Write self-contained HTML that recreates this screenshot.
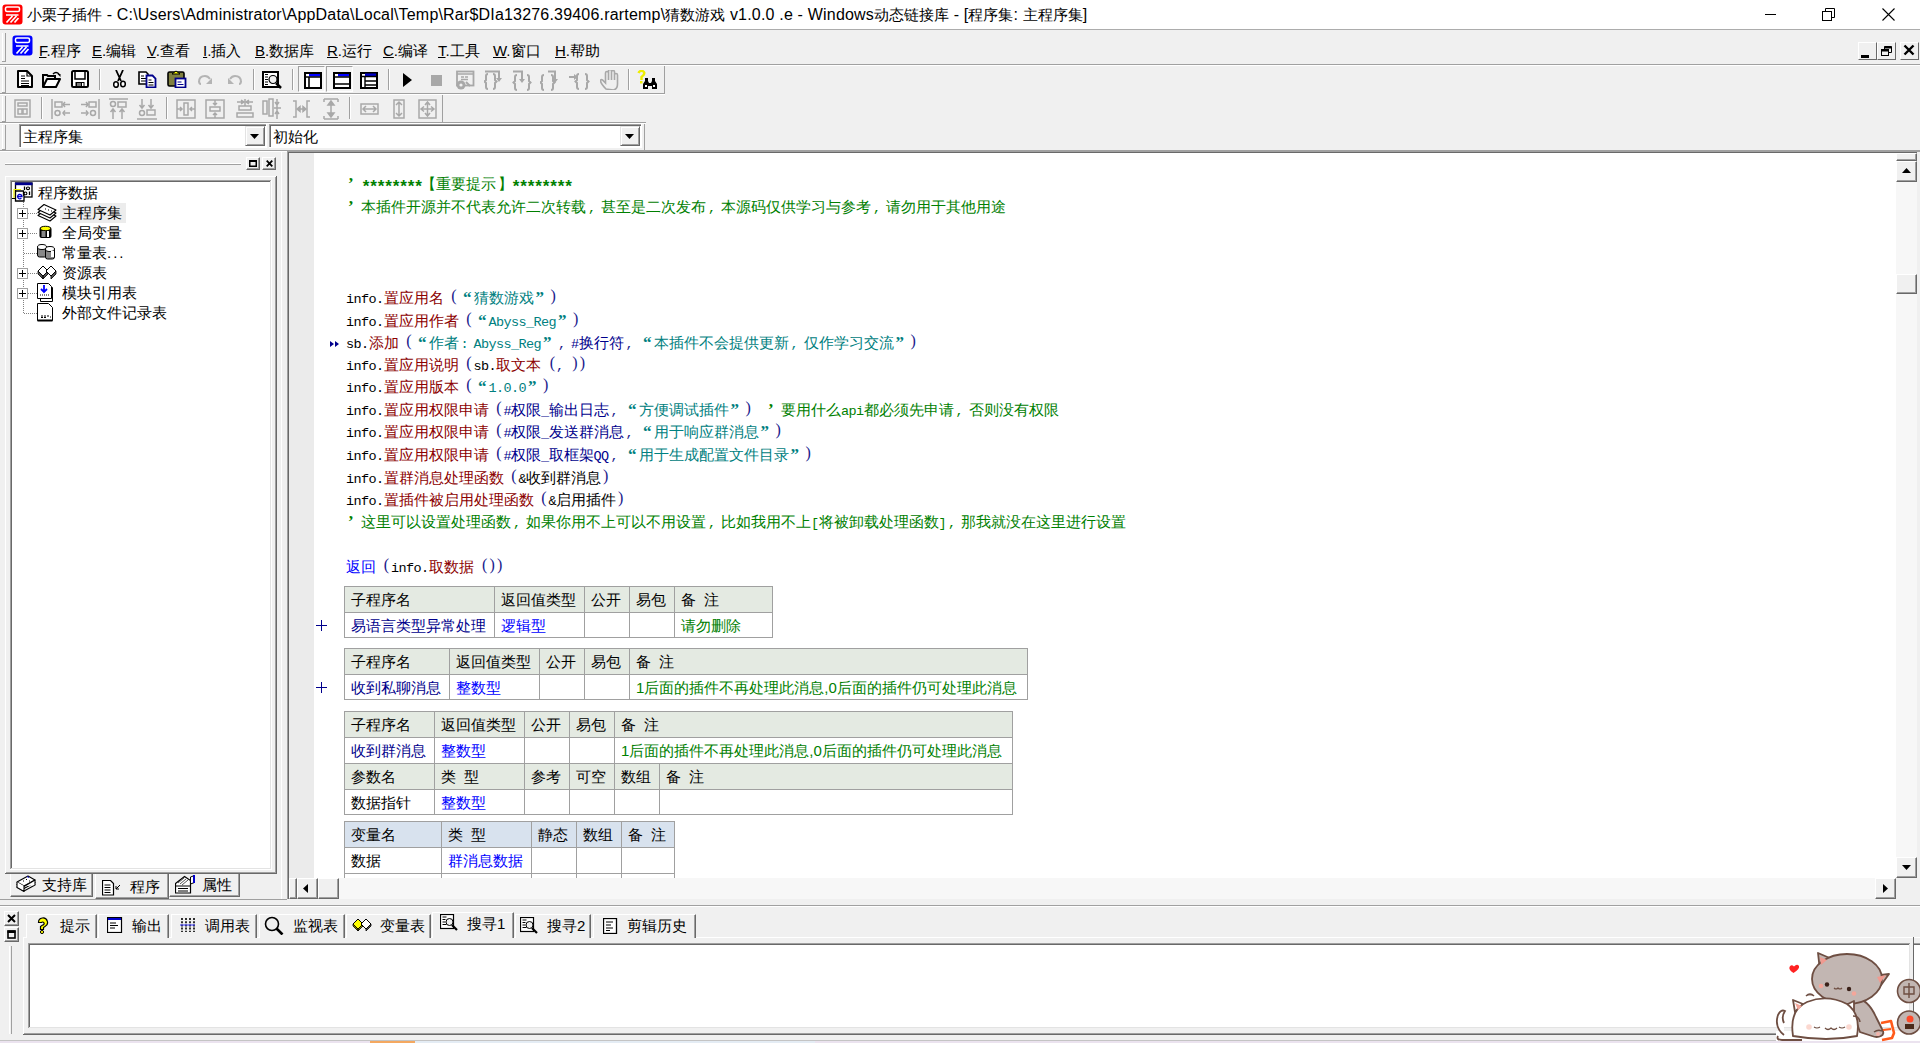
<!DOCTYPE html>
<html><head><meta charset="utf-8"><style>
*{box-sizing:border-box;margin:0;padding:0}
html,body{width:1920px;height:1043px;overflow:hidden;background:#f0f0f0;font-family:"Liberation Sans",sans-serif;position:relative}
.a{position:absolute}
.t{position:absolute;white-space:pre;line-height:1}
.l{font-size:16px;letter-spacing:0.19px}
.m{font-family:"Liberation Mono",monospace;font-size:13.5px;letter-spacing:-0.6px}
.cl{position:absolute;white-space:pre;font-size:15px;line-height:15px;height:15px}
.fp{display:inline-block;width:15px}
.ast{font-size:17px;letter-spacing:-2.7px;position:relative;top:3px;font-weight:bold}
.fa{display:inline-block;width:7.5px;text-align:center}
.ps{font-family:"Liberation Serif",serif;font-size:16px;position:relative;top:-2px}
.pq{font-family:"Liberation Serif",serif;font-size:17px;font-weight:bold;vertical-align:top}
.tc{position:absolute;white-space:pre;font-size:15px;line-height:15px}
</style></head><body>
<div class="a" style="left:0px;top:0px;width:1920px;height:29px;background:#fff;"></div>
<div class="a" style="left:0px;top:29px;width:1920px;height:1px;background:#acacac;"></div>
<svg class="a" style="left:2px;top:4px;" width="21" height="21" viewBox="0 0 21 21"><rect x="0.5" y="0.5" width="20" height="20" rx="3" fill="#f00"/><rect x="3.5" y="3" width="14" height="4.5" rx="1.5" fill="none" stroke="#fff" stroke-width="1.5"/><path d="M4 11h12.5M4.5 18.5l6-6.5M8.5 18.5l6-6.5M12.5 18.5l4-4.5" stroke="#fff" stroke-width="1.7" fill="none"/></svg>
<div class="t" style="left:27px;top:7px;font-size:15px;color:#000;">小栗子插件<span class="l"> - C:\Users\Administrator\AppData\Local\Temp\Rar$DIa13276.39406.rartemp\</span>猜数游戏<span class="l"> v1.0.0 .e - Windows</span>动态链接库<span class="l"> - [</span>程序集<span class="l">: </span>主程序集<span class="l">]</span></div>
<div class="a" style="left:1765px;top:14px;width:11px;height:1px;background:#000;"></div>
<svg class="a" style="left:1822px;top:8px;" width="14" height="14" viewBox="0 0 14 14"><rect x="0.5" y="3.5" width="9" height="9" fill="none" stroke="#000"/><path d="M3.5 3.5V0.5h9v9h-3" fill="none" stroke="#000"/></svg>
<svg class="a" style="left:1882px;top:8px;" width="13" height="13" viewBox="0 0 13 13"><path d="M0.5 0.5L12.5 12.5M12.5 0.5L0.5 12.5" stroke="#000" stroke-width="1.1"/></svg>
<div class="a" style="left:0px;top:64px;width:1920px;height:1px;background:#a0a0a0;"></div>
<div class="a" style="left:0px;top:65px;width:1920px;height:1px;background:#fff;"></div>
<div class="a" style="left:2px;top:33px;width:1px;height:29px;background:#fff;"></div>
<div class="a" style="left:5px;top:33px;width:1px;height:29px;background:#a0a0a0;"></div>
<div class="a" style="left:2px;top:61px;width:4px;height:1px;background:#a0a0a0;"></div>
<svg class="a" style="left:12px;top:35px;" width="21" height="21" viewBox="0 0 21 21"><rect x="0.5" y="0.5" width="20" height="20" rx="3" fill="#00f"/><rect x="3.5" y="3" width="14" height="4.5" rx="1.5" fill="none" stroke="#fff" stroke-width="1.5"/><path d="M4 11h12.5M4.5 18.5l6-6.5M8.5 18.5l6-6.5M12.5 18.5l4-4.5" stroke="#fff" stroke-width="1.7" fill="none"/></svg>
<div class="t" style="left:39px;top:43px;font-size:15px;color:#000;"><span style="text-decoration:underline">F</span>.程序</div>
<div class="t" style="left:92px;top:43px;font-size:15px;color:#000;"><span style="text-decoration:underline">E</span>.编辑</div>
<div class="t" style="left:147px;top:43px;font-size:15px;color:#000;"><span style="text-decoration:underline">V</span>.查看</div>
<div class="t" style="left:203px;top:43px;font-size:15px;color:#000;"><span style="text-decoration:underline">I</span>.插入</div>
<div class="t" style="left:255px;top:43px;font-size:15px;color:#000;"><span style="text-decoration:underline">B</span>.数据库</div>
<div class="t" style="left:327px;top:43px;font-size:15px;color:#000;"><span style="text-decoration:underline">R</span>.运行</div>
<div class="t" style="left:383px;top:43px;font-size:15px;color:#000;"><span style="text-decoration:underline">C</span>.编译</div>
<div class="t" style="left:438px;top:43px;font-size:15px;color:#000;"><span style="text-decoration:underline">T</span>.工具</div>
<div class="t" style="left:493px;top:43px;font-size:15px;color:#000;"><span style="text-decoration:underline">W</span>.窗口</div>
<div class="t" style="left:555px;top:43px;font-size:15px;color:#000;"><span style="text-decoration:underline">H</span>.帮助</div>
<div class="a" style="left:1858px;top:42px;width:19px;height:18px;background:#f0f0f0;border-top:1px solid #fff;border-left:1px solid #fff;border-right:1px solid #696969;border-bottom:1px solid #696969"></div>
<div class="a" style="left:1877px;top:42px;width:19px;height:18px;background:#f0f0f0;border-top:1px solid #fff;border-left:1px solid #fff;border-right:1px solid #696969;border-bottom:1px solid #696969"></div>
<div class="a" style="left:1900px;top:42px;width:19px;height:18px;background:#f0f0f0;border-top:1px solid #fff;border-left:1px solid #fff;border-right:1px solid #696969;border-bottom:1px solid #696969"></div>
<div class="a" style="left:1861px;top:55px;width:8px;height:3px;background:#000;"></div>
<svg class="a" style="left:1880px;top:44px;" width="14" height="14" viewBox="0 0 14 14"><rect x="1.5" y="5.5" width="7" height="6" fill="none" stroke="#000" stroke-width="1"/><rect x="1.5" y="5.5" width="7" height="2" fill="#000"/><path d="M4.5 5.5V2.5h7v6h-3" fill="none" stroke="#000"/><rect x="4.5" y="2.5" width="7" height="2" fill="#000"/></svg>
<svg class="a" style="left:1903px;top:44px;" width="12" height="12" viewBox="0 0 12 12"><path d="M1.5 1.5L10.5 10.5M10.5 1.5L1.5 10.5" stroke="#000" stroke-width="2.4"/></svg>
<div class="a" style="left:2px;top:67px;width:1px;height:26px;background:#fff;"></div>
<div class="a" style="left:5px;top:67px;width:1px;height:26px;background:#a0a0a0;"></div>
<div class="a" style="left:2px;top:92px;width:4px;height:1px;background:#a0a0a0;"></div>
<div class="a" style="left:0px;top:93px;width:665px;height:1px;background:#a0a0a0;"></div>
<div class="a" style="left:0px;top:94px;width:665px;height:1px;background:#fff;"></div>
<div class="a" style="left:664px;top:66px;width:1px;height:28px;background:#a0a0a0;"></div>
<div class="a" style="left:2px;top:96px;width:1px;height:26px;background:#fff;"></div>
<div class="a" style="left:5px;top:96px;width:1px;height:26px;background:#a0a0a0;"></div>
<div class="a" style="left:2px;top:121px;width:4px;height:1px;background:#a0a0a0;"></div>
<div class="a" style="left:0px;top:122px;width:646px;height:1px;background:#a0a0a0;"></div>
<div class="a" style="left:0px;top:123px;width:646px;height:1px;background:#fff;"></div>
<div class="a" style="left:442px;top:95px;width:1px;height:28px;background:#a0a0a0;"></div>
<div class="a" style="left:2px;top:125px;width:1px;height:25px;background:#fff;"></div>
<div class="a" style="left:5px;top:125px;width:1px;height:25px;background:#a0a0a0;"></div>
<div class="a" style="left:2px;top:149px;width:4px;height:1px;background:#a0a0a0;"></div>
<div class="a" style="left:644px;top:124px;width:1px;height:27px;background:#a0a0a0;"></div>
<div class="a" style="left:19px;top:124px;width:248px;height:24px;background:#fff;"></div>
<div class="a" style="left:19px;top:124px;width:248px;height:1px;background:#a0a0a0;"></div>
<div class="a" style="left:19px;top:124px;width:1px;height:24px;background:#a0a0a0;"></div>
<div class="a" style="left:20px;top:125px;width:246px;height:1px;background:#696969;"></div>
<div class="a" style="left:20px;top:125px;width:1px;height:22px;background:#696969;"></div>
<div class="a" style="left:19px;top:147px;width:248px;height:1px;background:#fff;"></div>
<div class="a" style="left:266px;top:124px;width:1px;height:24px;background:#fff;"></div>
<div class="a" style="left:245px;top:126px;width:20px;height:20px;background:#f0f0f0;border-top:1px solid #e3e3e3;border-left:1px solid #e3e3e3;border-right:1px solid #696969;border-bottom:1px solid #696969;box-shadow:inset 1px 1px 0 #fff,inset -1px -1px 0 #a0a0a0"></div>
<svg class="a" style="left:250px;top:134px;" width="10" height="6" viewBox="0 0 10 6"><path d="M0 0h9L4.5 5z" fill="#000"/></svg>
<div class="t" style="left:23px;top:129px;font-size:15px;color:#000;">主程序集</div>
<div class="a" style="left:269px;top:124px;width:373px;height:24px;background:#fff;"></div>
<div class="a" style="left:269px;top:124px;width:373px;height:1px;background:#a0a0a0;"></div>
<div class="a" style="left:269px;top:124px;width:1px;height:24px;background:#a0a0a0;"></div>
<div class="a" style="left:270px;top:125px;width:371px;height:1px;background:#696969;"></div>
<div class="a" style="left:270px;top:125px;width:1px;height:22px;background:#696969;"></div>
<div class="a" style="left:269px;top:147px;width:373px;height:1px;background:#fff;"></div>
<div class="a" style="left:641px;top:124px;width:1px;height:24px;background:#fff;"></div>
<div class="a" style="left:620px;top:126px;width:20px;height:20px;background:#f0f0f0;border-top:1px solid #e3e3e3;border-left:1px solid #e3e3e3;border-right:1px solid #696969;border-bottom:1px solid #696969;box-shadow:inset 1px 1px 0 #fff,inset -1px -1px 0 #a0a0a0"></div>
<svg class="a" style="left:625px;top:134px;" width="10" height="6" viewBox="0 0 10 6"><path d="M0 0h9L4.5 5z" fill="#000"/></svg>
<div class="t" style="left:273px;top:129px;font-size:15px;color:#000;">初始化</div>
<div class="a" style="left:0px;top:150px;width:1920px;height:1px;background:#a0a0a0;"></div>
<div class="a" style="left:0px;top:151px;width:1920px;height:1px;background:#fff;"></div>
<div class="a" style="left:5px;top:163px;width:236px;height:1px;background:#fff;"></div>
<div class="a" style="left:5px;top:164px;width:236px;height:1px;background:#a0a0a0;"></div>
<div class="a" style="left:246px;top:157px;width:14px;height:13px;background:#f0f0f0;border-top:1px solid #fff;border-left:1px solid #fff;border-right:1px solid #696969;border-bottom:1px solid #696969;box-shadow:inset -1px -1px 0 #a0a0a0"></div>
<div class="a" style="left:262px;top:157px;width:14px;height:13px;background:#f0f0f0;border-top:1px solid #fff;border-left:1px solid #fff;border-right:1px solid #696969;border-bottom:1px solid #696969;box-shadow:inset -1px -1px 0 #a0a0a0"></div>
<svg class="a" style="left:249px;top:160px;" width="8" height="7" viewBox="0 0 8 7"><rect x="0.75" y="0.75" width="6.5" height="5.5" fill="none" stroke="#000" stroke-width="1.5"/><rect x="0" y="0" width="8" height="2" fill="#000"/></svg>
<svg class="a" style="left:266px;top:160px;" width="7" height="7" viewBox="0 0 7 7"><path d="M0.7 0.7L6.3 6.3M6.3 0.7L0.7 6.3" stroke="#000" stroke-width="1.8"/></svg>
<div class="a" style="left:5px;top:176px;width:272px;height:1px;background:#fff;"></div>
<div class="a" style="left:5px;top:176px;width:1px;height:698px;background:#fff;"></div>
<div class="a" style="left:276px;top:176px;width:1px;height:698px;background:#696969;"></div>
<div class="a" style="left:5px;top:873px;width:272px;height:1px;background:#696969;"></div>
<div class="a" style="left:275px;top:177px;width:1px;height:696px;background:#a0a0a0;"></div>
<div class="a" style="left:6px;top:872px;width:270px;height:1px;background:#a0a0a0;"></div>
<div class="a" style="left:10px;top:180px;width:262px;height:690px;background:#fff;"></div>
<div class="a" style="left:10px;top:180px;width:261px;height:1px;background:#a0a0a0;"></div>
<div class="a" style="left:10px;top:180px;width:1px;height:689px;background:#a0a0a0;"></div>
<div class="a" style="left:11px;top:181px;width:259px;height:1px;background:#696969;"></div>
<div class="a" style="left:11px;top:181px;width:1px;height:687px;background:#696969;"></div>
<div class="a" style="left:270px;top:181px;width:1px;height:688px;background:#e3e3e3;"></div>
<div class="a" style="left:11px;top:868px;width:260px;height:1px;background:#e3e3e3;"></div>
<div class="a" style="left:281px;top:152px;width:1px;height:748px;background:#fff;"></div>
<div class="a" style="left:0px;top:899px;width:287px;height:1px;background:#a0a0a0;"></div>
<div class="a" style="left:287px;top:151px;width:1633px;height:1px;background:#a0a0a0;"></div>
<div class="a" style="left:287px;top:152px;width:1630px;height:1px;background:#696969;"></div>
<div class="a" style="left:287px;top:151px;width:1px;height:748px;background:#a0a0a0;"></div>
<div class="a" style="left:288px;top:152px;width:1px;height:747px;background:#696969;"></div>
<div class="a" style="left:289px;top:153px;width:25px;height:725px;background:#ebebeb;"></div>
<div class="a" style="left:314px;top:153px;width:1582px;height:725px;background:#fff;"></div>
<div class="a" style="left:0px;top:905px;width:1920px;height:1px;background:#a0a0a0;"></div>
<div class="a" style="left:0px;top:906px;width:1920px;height:1px;background:#fff;"></div>
<div class="a" style="left:4px;top:911px;width:15px;height:15px;background:#f0f0f0;border-top:1px solid #fff;border-left:1px solid #fff;border-right:1px solid #696969;border-bottom:1px solid #696969;box-shadow:inset -1px -1px 0 #a0a0a0"></div>
<div class="a" style="left:4px;top:927px;width:15px;height:15px;background:#f0f0f0;border-top:1px solid #fff;border-left:1px solid #fff;border-right:1px solid #696969;border-bottom:1px solid #696969;box-shadow:inset -1px -1px 0 #a0a0a0"></div>
<svg class="a" style="left:7px;top:914px;" width="9" height="9" viewBox="0 0 9 9"><path d="M1 1L8 8M8 1L1 8" stroke="#000" stroke-width="2"/></svg>
<svg class="a" style="left:7px;top:930px;" width="9" height="9" viewBox="0 0 9 9"><rect x="1" y="1" width="7" height="7" fill="none" stroke="#000" stroke-width="1.6"/><rect x="0.5" y="0.5" width="8" height="2.5" fill="#000"/></svg>
<div class="a" style="left:9px;top:946px;width:1px;height:88px;background:#fff;"></div>
<div class="a" style="left:11px;top:946px;width:1px;height:88px;background:#a0a0a0;"></div>
<div class="a" style="left:23px;top:937px;width:1897px;height:1px;background:#fff;"></div>
<div class="a" style="left:23px;top:937px;width:1px;height:98px;background:#fff;"></div>
<div class="a" style="left:23px;top:1034px;width:1897px;height:1px;background:#696969;"></div>
<div class="a" style="left:24px;top:1033px;width:1896px;height:1px;background:#a0a0a0;"></div>
<div class="a" style="left:28px;top:943px;width:1892px;height:85px;background:#fff;"></div>
<div class="a" style="left:28px;top:943px;width:1892px;height:1px;background:#a0a0a0;"></div>
<div class="a" style="left:28px;top:943px;width:1px;height:85px;background:#a0a0a0;"></div>
<div class="a" style="left:29px;top:944px;width:1891px;height:1px;background:#696969;"></div>
<div class="a" style="left:29px;top:944px;width:1px;height:83px;background:#696969;"></div>
<div class="a" style="left:29px;top:1027px;width:1891px;height:1px;background:#e3e3e3;"></div>
<div class="a" style="left:0px;top:1040px;width:1920px;height:1px;background:#c4c4c4;"></div>
<div class="a" style="left:0px;top:1041px;width:1920px;height:2px;background:#ebe3ef;"></div>
<div class="a" style="left:370px;top:1041px;width:45px;height:2px;background:#f4a860;"></div>
<div class="a" style="left:415px;top:1041px;width:400px;height:2px;background:#e4ecf4;"></div>
<div class="cl" style="left:346px;top:176px"><span class="fp pq" style="color:#008000;text-align:left;padding-left:2px;">’</span><span class="m ast" style="color:#008000">********</span><span class="fp" style="color:#008000;text-align:right;padding-right:2px;">【</span><span style="color:#008000">重要提示</span><span class="fp" style="color:#008000;text-align:left;padding-left:2px;">】</span><span class="m ast" style="color:#008000">********</span></div>
<div class="cl" style="left:346px;top:199px"><span class="fp pq" style="color:#008000;text-align:left;padding-left:2px;">’</span><span style="color:#008000">本插件开源并不代表允许二次转载</span><span class="fp m" style="color:#008000;text-align:left;padding-left:2px;">,</span><span style="color:#008000">甚至是二次发布</span><span class="fp m" style="color:#008000;text-align:left;padding-left:2px;">,</span><span style="color:#008000">本源码仅供学习与参考</span><span class="fp m" style="color:#008000;text-align:left;padding-left:2px;">,</span><span style="color:#008000">请勿用于其他用途</span></div>
<div class="cl" style="left:346px;top:290px"><span class="m" style="color:#000">info.</span><span style="color:#8c0000">置应用名</span><span class="fp ps" style="color:#1a1a8c;text-align:right;padding-right:2px;">(</span><span class="fp pq" style="color:#008080;text-align:right;padding-right:2px;">“</span><span style="color:#008080">猜数游戏</span><span class="fp pq" style="color:#008080;text-align:left;padding-left:2px;">”</span><span class="fp ps" style="color:#1a1a8c;text-align:left;padding-left:2px;">)</span></div>
<div class="cl" style="left:346px;top:313px"><span class="m" style="color:#000">info.</span><span style="color:#8c0000">置应用作者</span><span class="fp ps" style="color:#1a1a8c;text-align:right;padding-right:2px;">(</span><span class="fp pq" style="color:#008080;text-align:right;padding-right:2px;">“</span><span class="m" style="color:#008080">Abyss_Reg</span><span class="fp pq" style="color:#008080;text-align:left;padding-left:2px;">”</span><span class="fp ps" style="color:#1a1a8c;text-align:left;padding-left:2px;">)</span></div>
<div class="cl" style="left:346px;top:335px"><span class="m" style="color:#000">sb.</span><span style="color:#8c0000">添加</span><span class="fp ps" style="color:#1a1a8c;text-align:right;padding-right:2px;">(</span><span class="fp pq" style="color:#008080;text-align:right;padding-right:2px;">“</span><span style="color:#008080">作者</span><span class="fp m" style="color:#008080;text-align:left;padding-left:2px;">:</span><span class="m" style="color:#008080">Abyss_Reg</span><span class="fp pq" style="color:#008080;text-align:left;padding-left:2px;">”</span><span class="fp m" style="color:#1a1a8c;text-align:left;padding-left:2px;">,</span><span class="m" style="color:#00008c">#</span><span style="color:#00008c">换行符</span><span class="fp m" style="color:#1a1a8c;text-align:left;padding-left:2px;">,</span><span class="fp pq" style="color:#008080;text-align:right;padding-right:2px;">“</span><span style="color:#008080">本插件不会提供更新</span><span class="fp m" style="color:#008080;text-align:left;padding-left:2px;">,</span><span style="color:#008080">仅作学习交流</span><span class="fp pq" style="color:#008080;text-align:left;padding-left:2px;">”</span><span class="fp ps" style="color:#1a1a8c;text-align:left;padding-left:2px;">)</span></div>
<div class="cl" style="left:346px;top:357px"><span class="m" style="color:#000">info.</span><span style="color:#8c0000">置应用说明</span><span class="fp ps" style="color:#1a1a8c;text-align:right;padding-right:2px;">(</span><span class="m" style="color:#000">sb.</span><span style="color:#8c0000">取文本</span><span class="m" style="color:#1a1a8c"> </span><span class="fa ps" style="color:#1a1a8c">(</span><span class="m" style="color:#1a1a8c">, </span><span class="fa ps" style="color:#1a1a8c">)</span><span class="fa ps" style="color:#1a1a8c">)</span></div>
<div class="cl" style="left:346px;top:379px"><span class="m" style="color:#000">info.</span><span style="color:#8c0000">置应用版本</span><span class="fp ps" style="color:#1a1a8c;text-align:right;padding-right:2px;">(</span><span class="fp pq" style="color:#008080;text-align:right;padding-right:2px;">“</span><span class="m" style="color:#008080">1.0.0</span><span class="fp pq" style="color:#008080;text-align:left;padding-left:2px;">”</span><span class="fp ps" style="color:#1a1a8c;text-align:left;padding-left:2px;">)</span></div>
<div class="cl" style="left:346px;top:402px"><span class="m" style="color:#000">info.</span><span style="color:#8c0000">置应用权限申请</span><span class="fp ps" style="color:#1a1a8c;text-align:right;padding-right:2px;">(</span><span class="m" style="color:#00008c">#</span><span style="color:#00008c">权限</span><span class="m" style="color:#00008c">_</span><span style="color:#00008c">输出日志</span><span class="fp m" style="color:#1a1a8c;text-align:left;padding-left:2px;">,</span><span class="fp pq" style="color:#008080;text-align:right;padding-right:2px;">“</span><span style="color:#008080">方便调试插件</span><span class="fp pq" style="color:#008080;text-align:left;padding-left:2px;">”</span><span class="fp ps" style="color:#1a1a8c;text-align:left;padding-left:2px;">)</span><span class="m" style="color:#000"> </span><span class="fp pq" style="color:#008000;text-align:left;padding-left:2px;">’</span><span style="color:#008000">要用什么</span><span class="m" style="color:#008000">api</span><span style="color:#008000">都必须先申请</span><span class="fp m" style="color:#008000;text-align:left;padding-left:2px;">,</span><span style="color:#008000">否则没有权限</span></div>
<div class="cl" style="left:346px;top:424px"><span class="m" style="color:#000">info.</span><span style="color:#8c0000">置应用权限申请</span><span class="fp ps" style="color:#1a1a8c;text-align:right;padding-right:2px;">(</span><span class="m" style="color:#00008c">#</span><span style="color:#00008c">权限</span><span class="m" style="color:#00008c">_</span><span style="color:#00008c">发送群消息</span><span class="fp m" style="color:#1a1a8c;text-align:left;padding-left:2px;">,</span><span class="fp pq" style="color:#008080;text-align:right;padding-right:2px;">“</span><span style="color:#008080">用于响应群消息</span><span class="fp pq" style="color:#008080;text-align:left;padding-left:2px;">”</span><span class="fp ps" style="color:#1a1a8c;text-align:left;padding-left:2px;">)</span></div>
<div class="cl" style="left:346px;top:447px"><span class="m" style="color:#000">info.</span><span style="color:#8c0000">置应用权限申请</span><span class="fp ps" style="color:#1a1a8c;text-align:right;padding-right:2px;">(</span><span class="m" style="color:#00008c">#</span><span style="color:#00008c">权限</span><span class="m" style="color:#00008c">_</span><span style="color:#00008c">取框架</span><span class="m" style="color:#00008c">QQ</span><span class="fp m" style="color:#1a1a8c;text-align:left;padding-left:2px;">,</span><span class="fp pq" style="color:#008080;text-align:right;padding-right:2px;">“</span><span style="color:#008080">用于生成配置文件目录</span><span class="fp pq" style="color:#008080;text-align:left;padding-left:2px;">”</span><span class="fp ps" style="color:#1a1a8c;text-align:left;padding-left:2px;">)</span></div>
<div class="cl" style="left:346px;top:470px"><span class="m" style="color:#000">info.</span><span style="color:#8c0000">置群消息处理函数</span><span class="fp ps" style="color:#1a1a8c;text-align:right;padding-right:2px;">(</span><span class="m" style="color:#000">&amp;</span><span style="color:#000">收到群消息</span><span class="fp ps" style="color:#1a1a8c;text-align:left;padding-left:2px;">)</span></div>
<div class="cl" style="left:346px;top:492px"><span class="m" style="color:#000">info.</span><span style="color:#8c0000">置插件被启用处理函数</span><span class="fp ps" style="color:#1a1a8c;text-align:right;padding-right:2px;">(</span><span class="m" style="color:#000">&amp;</span><span style="color:#000">启用插件</span><span class="fp ps" style="color:#1a1a8c;text-align:left;padding-left:2px;">)</span></div>
<div class="cl" style="left:346px;top:514px"><span class="fp pq" style="color:#008000;text-align:left;padding-left:2px;">’</span><span style="color:#008000">这里可以设置处理函数</span><span class="fp m" style="color:#008000;text-align:left;padding-left:2px;">,</span><span style="color:#008000">如果你用不上可以不用设置</span><span class="fp m" style="color:#008000;text-align:left;padding-left:2px;">,</span><span style="color:#008000">比如我用不上</span><span class="m" style="color:#008000">[</span><span style="color:#008000">将被卸载处理函数</span><span class="m" style="color:#008000">]</span><span class="fp m" style="color:#008000;text-align:left;padding-left:2px;">,</span><span style="color:#008000">那我就没在这里进行设置</span></div>
<div class="cl" style="left:346px;top:559px"><span style="color:#0000ff">返回</span><span class="fp ps" style="color:#1a1a8c;text-align:right;padding-right:2px;">(</span><span class="m" style="color:#000">info.</span><span style="color:#8c0000">取数据</span><span class="m" style="color:#1a1a8c"> </span><span class="fa ps" style="color:#1a1a8c">(</span><span class="fa ps" style="color:#1a1a8c">)</span><span class="fa ps" style="color:#1a1a8c">)</span></div>
<svg class="a" style="left:330px;top:341px;" width="9" height="6" viewBox="0 0 9 6"><path d="M0 0l4 3l-4 3zM5 0l4 3l-4 3z" fill="#00008c"/></svg>
<div class="a" style="left:344px;top:586px;width:429px;height:27px;background:#e4eae2;border:1px solid #a0a0a0"></div>
<div class="a" style="left:494px;top:586px;width:1px;height:27px;background:#a0a0a0"></div>
<div class="a" style="left:584px;top:586px;width:1px;height:27px;background:#a0a0a0"></div>
<div class="a" style="left:629px;top:586px;width:1px;height:27px;background:#a0a0a0"></div>
<div class="a" style="left:674px;top:586px;width:1px;height:27px;background:#a0a0a0"></div>
<div class="tc" style="left:351px;top:592px;color:#000">子程序名</div>
<div class="tc" style="left:501px;top:592px;color:#000">返回值类型</div>
<div class="tc" style="left:591px;top:592px;color:#000">公开</div>
<div class="tc" style="left:636px;top:592px;color:#000">易包</div>
<div class="tc" style="left:681px;top:592px;color:#000">备  注</div>
<div class="a" style="left:344px;top:612px;width:429px;height:26px;background:#fff;border:1px solid #a0a0a0"></div>
<div class="a" style="left:494px;top:612px;width:1px;height:26px;background:#a0a0a0"></div>
<div class="a" style="left:584px;top:612px;width:1px;height:26px;background:#a0a0a0"></div>
<div class="a" style="left:629px;top:612px;width:1px;height:26px;background:#a0a0a0"></div>
<div class="a" style="left:674px;top:612px;width:1px;height:26px;background:#a0a0a0"></div>
<div class="tc" style="left:351px;top:618px;color:#00008c">易语言类型异常处理</div>
<div class="tc" style="left:501px;top:618px;color:#0000ff">逻辑型</div>
<div class="tc" style="left:681px;top:618px;color:#008000">请勿删除</div>
<div class="a" style="left:344px;top:648px;width:684px;height:27px;background:#e4eae2;border:1px solid #a0a0a0"></div>
<div class="a" style="left:449px;top:648px;width:1px;height:27px;background:#a0a0a0"></div>
<div class="a" style="left:539px;top:648px;width:1px;height:27px;background:#a0a0a0"></div>
<div class="a" style="left:584px;top:648px;width:1px;height:27px;background:#a0a0a0"></div>
<div class="a" style="left:629px;top:648px;width:1px;height:27px;background:#a0a0a0"></div>
<div class="tc" style="left:351px;top:654px;color:#000">子程序名</div>
<div class="tc" style="left:456px;top:654px;color:#000">返回值类型</div>
<div class="tc" style="left:546px;top:654px;color:#000">公开</div>
<div class="tc" style="left:591px;top:654px;color:#000">易包</div>
<div class="tc" style="left:636px;top:654px;color:#000">备  注</div>
<div class="a" style="left:344px;top:674px;width:684px;height:26px;background:#fff;border:1px solid #a0a0a0"></div>
<div class="a" style="left:449px;top:674px;width:1px;height:26px;background:#a0a0a0"></div>
<div class="a" style="left:539px;top:674px;width:1px;height:26px;background:#a0a0a0"></div>
<div class="a" style="left:584px;top:674px;width:1px;height:26px;background:#a0a0a0"></div>
<div class="a" style="left:629px;top:674px;width:1px;height:26px;background:#a0a0a0"></div>
<div class="tc" style="left:351px;top:680px;color:#00008c">收到私聊消息</div>
<div class="tc" style="left:456px;top:680px;color:#0000ff">整数型</div>
<div class="tc" style="left:636px;top:680px;color:#008000">1后面的插件不再处理此消息,0后面的插件仍可处理此消息</div>
<div class="a" style="left:344px;top:711px;width:669px;height:27px;background:#e4eae2;border:1px solid #a0a0a0"></div>
<div class="a" style="left:434px;top:711px;width:1px;height:27px;background:#a0a0a0"></div>
<div class="a" style="left:524px;top:711px;width:1px;height:27px;background:#a0a0a0"></div>
<div class="a" style="left:569px;top:711px;width:1px;height:27px;background:#a0a0a0"></div>
<div class="a" style="left:614px;top:711px;width:1px;height:27px;background:#a0a0a0"></div>
<div class="tc" style="left:351px;top:717px;color:#000">子程序名</div>
<div class="tc" style="left:441px;top:717px;color:#000">返回值类型</div>
<div class="tc" style="left:531px;top:717px;color:#000">公开</div>
<div class="tc" style="left:576px;top:717px;color:#000">易包</div>
<div class="tc" style="left:621px;top:717px;color:#000">备  注</div>
<div class="a" style="left:344px;top:737px;width:669px;height:27px;background:#fff;border:1px solid #a0a0a0"></div>
<div class="a" style="left:434px;top:737px;width:1px;height:27px;background:#a0a0a0"></div>
<div class="a" style="left:524px;top:737px;width:1px;height:27px;background:#a0a0a0"></div>
<div class="a" style="left:569px;top:737px;width:1px;height:27px;background:#a0a0a0"></div>
<div class="a" style="left:614px;top:737px;width:1px;height:27px;background:#a0a0a0"></div>
<div class="tc" style="left:351px;top:743px;color:#00008c">收到群消息</div>
<div class="tc" style="left:441px;top:743px;color:#0000ff">整数型</div>
<div class="tc" style="left:621px;top:743px;color:#008000">1后面的插件不再处理此消息,0后面的插件仍可处理此消息</div>
<div class="a" style="left:344px;top:763px;width:669px;height:27px;background:#e4eae2;border:1px solid #a0a0a0"></div>
<div class="a" style="left:434px;top:763px;width:1px;height:27px;background:#a0a0a0"></div>
<div class="a" style="left:524px;top:763px;width:1px;height:27px;background:#a0a0a0"></div>
<div class="a" style="left:569px;top:763px;width:1px;height:27px;background:#a0a0a0"></div>
<div class="a" style="left:614px;top:763px;width:1px;height:27px;background:#a0a0a0"></div>
<div class="a" style="left:659px;top:763px;width:1px;height:27px;background:#a0a0a0"></div>
<div class="tc" style="left:351px;top:769px;color:#000">参数名</div>
<div class="tc" style="left:441px;top:769px;color:#000">类  型</div>
<div class="tc" style="left:531px;top:769px;color:#000">参考</div>
<div class="tc" style="left:576px;top:769px;color:#000">可空</div>
<div class="tc" style="left:621px;top:769px;color:#000">数组</div>
<div class="tc" style="left:666px;top:769px;color:#000">备  注</div>
<div class="a" style="left:344px;top:789px;width:669px;height:26px;background:#fff;border:1px solid #a0a0a0"></div>
<div class="a" style="left:434px;top:789px;width:1px;height:26px;background:#a0a0a0"></div>
<div class="a" style="left:524px;top:789px;width:1px;height:26px;background:#a0a0a0"></div>
<div class="a" style="left:569px;top:789px;width:1px;height:26px;background:#a0a0a0"></div>
<div class="a" style="left:614px;top:789px;width:1px;height:26px;background:#a0a0a0"></div>
<div class="a" style="left:659px;top:789px;width:1px;height:26px;background:#a0a0a0"></div>
<div class="tc" style="left:351px;top:795px;color:#000">数据指针</div>
<div class="tc" style="left:441px;top:795px;color:#0000ff">整数型</div>
<div class="a" style="left:344px;top:821px;width:331px;height:27px;background:#d8e2ee;border:1px solid #a0a0a0"></div>
<div class="a" style="left:441px;top:821px;width:1px;height:27px;background:#a0a0a0"></div>
<div class="a" style="left:531px;top:821px;width:1px;height:27px;background:#a0a0a0"></div>
<div class="a" style="left:576px;top:821px;width:1px;height:27px;background:#a0a0a0"></div>
<div class="a" style="left:621px;top:821px;width:1px;height:27px;background:#a0a0a0"></div>
<div class="tc" style="left:351px;top:827px;color:#000">变量名</div>
<div class="tc" style="left:448px;top:827px;color:#000">类  型</div>
<div class="tc" style="left:538px;top:827px;color:#000">静态</div>
<div class="tc" style="left:583px;top:827px;color:#000">数组</div>
<div class="tc" style="left:628px;top:827px;color:#000">备  注</div>
<div class="a" style="left:344px;top:847px;width:331px;height:27px;background:#fff;border:1px solid #a0a0a0"></div>
<div class="a" style="left:441px;top:847px;width:1px;height:27px;background:#a0a0a0"></div>
<div class="a" style="left:531px;top:847px;width:1px;height:27px;background:#a0a0a0"></div>
<div class="a" style="left:576px;top:847px;width:1px;height:27px;background:#a0a0a0"></div>
<div class="a" style="left:621px;top:847px;width:1px;height:27px;background:#a0a0a0"></div>
<div class="tc" style="left:351px;top:853px;color:#000">数据</div>
<div class="tc" style="left:448px;top:853px;color:#0000ff">群消息数据</div>
<div class="a" style="left:344px;top:873px;width:331px;height:8px;background:#fff;border:1px solid #a0a0a0"></div>
<div class="a" style="left:441px;top:873px;width:1px;height:8px;background:#a0a0a0"></div>
<div class="a" style="left:531px;top:873px;width:1px;height:8px;background:#a0a0a0"></div>
<div class="a" style="left:576px;top:873px;width:1px;height:8px;background:#a0a0a0"></div>
<div class="a" style="left:621px;top:873px;width:1px;height:8px;background:#a0a0a0"></div>
<div class="a" style="left:316px;top:625px;width:11px;height:1px;background:#00008c;"></div>
<div class="a" style="left:321px;top:620px;width:1px;height:11px;background:#00008c;"></div>
<div class="a" style="left:316px;top:687px;width:11px;height:1px;background:#00008c;"></div>
<div class="a" style="left:321px;top:682px;width:1px;height:11px;background:#00008c;"></div>
<div class="a" style="left:1896px;top:153px;width:21px;height:725px;background:#f7f7f7;"></div>
<div class="a" style="left:1896px;top:153px;width:21px;height:8px;background:#f0f0f0;border-top:1px solid #fff;border-left:1px solid #fff;border-right:1px solid #696969;border-bottom:1px solid #696969;box-shadow:inset -1px -1px 0 #a0a0a0"></div>
<div class="a" style="left:1896px;top:161px;width:21px;height:21px;background:#f0f0f0;border-top:1px solid #fff;border-left:1px solid #fff;border-right:1px solid #696969;border-bottom:1px solid #696969;box-shadow:inset -1px -1px 0 #a0a0a0"></div>
<svg class="a" style="left:1902px;top:168px;" width="9" height="5" viewBox="0 0 9 5"><path d="M0 5h9L4.5 0z" fill="#000"/></svg>
<div class="a" style="left:1896px;top:274px;width:21px;height:20px;background:#f0f0f0;border-top:1px solid #fff;border-left:1px solid #fff;border-right:1px solid #696969;border-bottom:1px solid #696969;box-shadow:inset -1px -1px 0 #a0a0a0"></div>
<div class="a" style="left:1896px;top:857px;width:21px;height:21px;background:#f0f0f0;border-top:1px solid #fff;border-left:1px solid #fff;border-right:1px solid #696969;border-bottom:1px solid #696969;box-shadow:inset -1px -1px 0 #a0a0a0"></div>
<svg class="a" style="left:1902px;top:865px;" width="9" height="5" viewBox="0 0 9 5"><path d="M0 0h9L4.5 5z" fill="#000"/></svg>
<div class="a" style="left:289px;top:878px;width:1607px;height:21px;background:#f7f7f7;"></div>
<div class="a" style="left:289px;top:878px;width:8px;height:21px;background:#f0f0f0;border-top:1px solid #fff;border-left:1px solid #fff;border-right:1px solid #696969;border-bottom:1px solid #696969;box-shadow:inset -1px -1px 0 #a0a0a0"></div>
<div class="a" style="left:297px;top:878px;width:21px;height:21px;background:#f0f0f0;border-top:1px solid #fff;border-left:1px solid #fff;border-right:1px solid #696969;border-bottom:1px solid #696969;box-shadow:inset -1px -1px 0 #a0a0a0"></div>
<svg class="a" style="left:303px;top:884px;" width="5" height="9" viewBox="0 0 5 9"><path d="M5 0v9L0 4.5z" fill="#000"/></svg>
<div class="a" style="left:318px;top:878px;width:21px;height:21px;background:#f0f0f0;border-top:1px solid #fff;border-left:1px solid #fff;border-right:1px solid #696969;border-bottom:1px solid #696969;box-shadow:inset -1px -1px 0 #a0a0a0"></div>
<div class="a" style="left:1875px;top:878px;width:21px;height:21px;background:#f0f0f0;border-top:1px solid #fff;border-left:1px solid #fff;border-right:1px solid #696969;border-bottom:1px solid #696969;box-shadow:inset -1px -1px 0 #a0a0a0"></div>
<svg class="a" style="left:1883px;top:884px;" width="5" height="9" viewBox="0 0 5 9"><path d="M0 0v9L5 4.5z" fill="#000"/></svg>
<div class="a" style="left:1896px;top:878px;width:21px;height:21px;background:#f0f0f0;"></div>
<svg class="a" style="left:10px;top:181px;" width="26" height="23" viewBox="0 0 26 23"><rect x="5.5" y="2" width="16.5" height="14" fill="#fff" stroke="#000" stroke-width="1.3"/><rect x="5" y="1.5" width="17.5" height="2.7" fill="#00008c"/><path d="M14.5 5.5v3.5M19.5 10.5v3.5" stroke="#000" stroke-width="1.3"/><ellipse cx="18" cy="7.3" rx="1.6" ry="1.3" fill="none" stroke="#000" stroke-width="1.1"/><circle cx="15.5" cy="12.4" r="1.4" fill="none" stroke="#000" stroke-width="1.1"/><path d="M5.5 10h8v4h0.5v6h-8.5z" fill="#fff" stroke="#000" stroke-width="1.3"/><path d="M4 17V8.5h7" fill="none" stroke="#ee0" stroke-width="1.2"/><path d="M2 17.5h3" stroke="#000"/><path d="M8 15.5h4a2.2 2.2 0 1 0-0.6 1.6" fill="none" stroke="#00c" stroke-width="1.3"/></svg>
<div class="t" style="left:38px;top:185px;font-size:15px;color:#000;">程序数据</div>
<div class="a" style="left:23px;top:202px;width:1px;height:112px;background:repeating-linear-gradient(#808080 0 1px,transparent 1px 2px)"></div>
<div class="a" style="left:24px;top:213px;width:13px;height:1px;background:repeating-linear-gradient(90deg,#808080 0 1px,transparent 1px 2px)"></div>
<div class="a" style="left:17px;top:208px;width:11px;height:11px;background:#fff;border:1px solid #a0a0a0"></div>
<div class="a" style="left:19px;top:213px;width:7px;height:1px;background:#000;"></div>
<div class="a" style="left:22px;top:210px;width:1px;height:7px;background:#000;"></div>
<div class="a" style="left:24px;top:233px;width:13px;height:1px;background:repeating-linear-gradient(90deg,#808080 0 1px,transparent 1px 2px)"></div>
<div class="a" style="left:17px;top:228px;width:11px;height:11px;background:#fff;border:1px solid #a0a0a0"></div>
<div class="a" style="left:19px;top:233px;width:7px;height:1px;background:#000;"></div>
<div class="a" style="left:22px;top:230px;width:1px;height:7px;background:#000;"></div>
<div class="a" style="left:24px;top:253px;width:13px;height:1px;background:repeating-linear-gradient(90deg,#808080 0 1px,transparent 1px 2px)"></div>
<div class="a" style="left:24px;top:273px;width:13px;height:1px;background:repeating-linear-gradient(90deg,#808080 0 1px,transparent 1px 2px)"></div>
<div class="a" style="left:17px;top:268px;width:11px;height:11px;background:#fff;border:1px solid #a0a0a0"></div>
<div class="a" style="left:19px;top:273px;width:7px;height:1px;background:#000;"></div>
<div class="a" style="left:22px;top:270px;width:1px;height:7px;background:#000;"></div>
<div class="a" style="left:24px;top:293px;width:13px;height:1px;background:repeating-linear-gradient(90deg,#808080 0 1px,transparent 1px 2px)"></div>
<div class="a" style="left:17px;top:288px;width:11px;height:11px;background:#fff;border:1px solid #a0a0a0"></div>
<div class="a" style="left:19px;top:293px;width:7px;height:1px;background:#000;"></div>
<div class="a" style="left:22px;top:290px;width:1px;height:7px;background:#000;"></div>
<div class="a" style="left:24px;top:313px;width:13px;height:1px;background:repeating-linear-gradient(90deg,#808080 0 1px,transparent 1px 2px)"></div>
<div class="a" style="left:60px;top:203px;width:66px;height:20px;background:#ececec;"></div>
<div class="t" style="left:62px;top:205px;font-size:15px;color:#000;">主程序集</div>
<div class="t" style="left:62px;top:225px;font-size:15px;color:#000;">全局变量</div>
<div class="t" style="left:62px;top:245px;font-size:15px;color:#000;">常量表<span style="letter-spacing:2px">...</span></div>
<div class="t" style="left:62px;top:265px;font-size:15px;color:#000;">资源表</div>
<div class="t" style="left:62px;top:285px;font-size:15px;color:#000;">模块引用表</div>
<div class="t" style="left:62px;top:305px;font-size:15px;color:#000;">外部文件记录表</div>
<svg class="a" style="left:37px;top:203px;" width="20" height="19" viewBox="0 0 20 19"><g stroke="#000" stroke-width="1.1" fill="#fff" stroke-linejoin="round"><path d="M1 12.5l6-5l12 5.5l-6 5z"/><path d="M1 9.5l6-5l12 5.5l-6 5z"/><path d="M1 6.5l6-5l12 5.5l-6 5z"/></g><path d="M8 6h1M11 7h1M14 8h1" stroke="#000"/></svg>
<svg class="a" style="left:39px;top:225px;" width="13" height="14" viewBox="0 0 13 14"><rect x="0.5" y="2" width="12" height="11" rx="2" fill="#000"/><ellipse cx="6.5" cy="3.5" rx="5" ry="2.2" fill="#ff0" stroke="#000"/><rect x="2.5" y="6" width="4" height="6" fill="#888"/><path d="M8 6h2v6h-2z" fill="#fff"/></svg>
<svg class="a" style="left:37px;top:244px;" width="19" height="16" viewBox="0 0 19 16"><rect x="0.5" y="2" width="9" height="11" rx="2" fill="#888" stroke="#000"/><ellipse cx="5" cy="3" rx="4.5" ry="2.5" fill="#fff" stroke="#000"/><rect x="8.5" y="4" width="9" height="11" rx="2" fill="#888" stroke="#000"/><ellipse cx="13" cy="5" rx="4.5" ry="2.5" fill="#fff" stroke="#000"/><rect x="14" y="7" width="3" height="6" fill="#fff"/></svg>
<svg class="a" style="left:37px;top:265px;" width="20" height="15" viewBox="0 0 20 15"><path d="M1 6l5-5l5 5l-5 5z" fill="#fff" stroke="#000"/><path d="M1 6v3l5 5v-3zM6 11v3l5-5v-3z" fill="#555" stroke="#000" stroke-width="0.8"/><path d="M9 6l5-5l5 5l-5 5z" fill="#fff" stroke="#000"/><path d="M14 11v3l5-5v-3z" fill="#555" stroke="#000" stroke-width="0.8"/></svg>
<svg class="a" style="left:37px;top:283px;" width="19" height="19" viewBox="0 0 19 19"><path d="M3.5 4.5h12v14h-12z" fill="#fff" stroke="#000"/><path d="M0.5 0.5h11l3 3v12h-14z" fill="#fff" stroke="#000"/><path d="M7 2v7M4 6l3 3l3-3" stroke="#00f" stroke-width="1.8" fill="none"/><path d="M3 12h1M5 12h1M7 12h1M9 12h1M11 12h1" stroke="#000"/></svg>
<svg class="a" style="left:37px;top:303px;" width="17" height="19" viewBox="0 0 17 19"><path d="M0.5 0.5h11l4 4v13h-15z" fill="#fff" stroke="#000"/><path d="M0.5 17.5h15" stroke="#000" stroke-width="2"/><path d="M4 13h2M7 13h2M10 13h2M4 14.5h2M7 14.5h2M13 14h1" stroke="#000"/></svg>
<div class="a" style="left:10px;top:874px;width:83px;height:23px;background:#f0f0f0;border-left:1px solid #fff;border-right:1px solid #696969;border-bottom:1px solid #696969;box-shadow:inset -1px -1px 0 #a0a0a0"></div>
<div class="a" style="left:169px;top:874px;width:71px;height:23px;background:#f0f0f0;border-left:1px solid #fff;border-right:1px solid #696969;border-bottom:1px solid #696969;box-shadow:inset -1px -1px 0 #a0a0a0"></div>
<div class="a" style="left:95px;top:874px;width:74px;height:25px;background:#f0f0f0;border-left:1px solid #fff;border-right:1px solid #696969;border-bottom:1px solid #696969;box-shadow:inset -1px -1px 0 #a0a0a0"></div>
<div class="t" style="left:42px;top:877px;font-size:15px;color:#000;">支持库</div>
<div class="t" style="left:130px;top:879px;font-size:15px;color:#000;">程序</div>
<div class="t" style="left:202px;top:877px;font-size:15px;color:#000;">属性</div>
<svg class="a" style="left:16px;top:875px;" width="20" height="20" viewBox="0 0 20 20"><g stroke="#000" stroke-width="1.1" fill="#fff" stroke-linejoin="round"><path d="M1 12l11-6l7 4l-11 6z"/><path d="M1 9.5l11-6l7 4l-11 6z"/><path d="M1 7l11-6l7 4l-11 6z"/><path d="M1 7v5.5l7 4v-5.5M8 11.5l11-6.5v5"/></g><path d="M7 6h1M10 4.5h1M13 6h1" stroke="#000"/><path d="M11 1.5l2 1" stroke="#00c"/></svg>
<svg class="a" style="left:102px;top:880px;" width="20" height="16" viewBox="0 0 20 16"><path d="M0.5 0.5h8l3 3v11.5h-11z" fill="#fff" stroke="#000" stroke-width="1.2"/><path d="M2.5 5h6M2.5 7.5h6M2.5 10h6M2.5 12.5h6" stroke="#000"/><path d="M18 5l-4 4M14 6v3h3" stroke="#000" fill="none"/></svg>
<svg class="a" style="left:175px;top:875px;" width="22" height="19" viewBox="0 0 22 19"><path d="M0.5 8.5l9-7l6 4v12.5h-15z" fill="#fff" stroke="#000" stroke-width="1.2"/><path d="M3 8l6-5M5 9l6-5M7 10l6-5" stroke="#555"/><path d="M0.5 11h15M3 13.5h10M3 16h10" stroke="#000"/><path d="M15.5 2l4-1.5v7l-4 1.5z" fill="#fff" stroke="#000"/><path d="M19 0v8" stroke="#00c" stroke-width="2"/></svg>
<div class="a" style="left:26px;top:914px;width:71px;height:24px;background:#f0f0f0;border-top:1px solid #fff;border-left:1px solid #fff;border-right:1px solid #696969;box-shadow:inset -1px 0 0 #a0a0a0"></div>
<div class="t" style="left:60px;top:918px;font-size:15px;color:#000;">提示</div>
<div class="a" style="left:98px;top:914px;width:71px;height:24px;background:#f0f0f0;border-top:1px solid #fff;border-left:1px solid #fff;border-right:1px solid #696969;box-shadow:inset -1px 0 0 #a0a0a0"></div>
<div class="t" style="left:132px;top:918px;font-size:15px;color:#000;">输出</div>
<div class="a" style="left:171px;top:914px;width:86px;height:24px;background:#f0f0f0;border-top:1px solid #fff;border-left:1px solid #fff;border-right:1px solid #696969;box-shadow:inset -1px 0 0 #a0a0a0"></div>
<div class="t" style="left:205px;top:918px;font-size:15px;color:#000;">调用表</div>
<div class="a" style="left:259px;top:914px;width:86px;height:24px;background:#f0f0f0;border-top:1px solid #fff;border-left:1px solid #fff;border-right:1px solid #696969;box-shadow:inset -1px 0 0 #a0a0a0"></div>
<div class="t" style="left:293px;top:918px;font-size:15px;color:#000;">监视表</div>
<div class="a" style="left:346px;top:914px;width:85px;height:24px;background:#f0f0f0;border-top:1px solid #fff;border-left:1px solid #fff;border-right:1px solid #696969;box-shadow:inset -1px 0 0 #a0a0a0"></div>
<div class="t" style="left:380px;top:918px;font-size:15px;color:#000;">变量表</div>
<div class="a" style="left:515px;top:914px;width:76px;height:24px;background:#f0f0f0;border-top:1px solid #fff;border-left:1px solid #fff;border-right:1px solid #696969;box-shadow:inset -1px 0 0 #a0a0a0"></div>
<div class="t" style="left:547px;top:918px;font-size:15px;color:#000;">搜寻2</div>
<div class="a" style="left:593px;top:914px;width:103px;height:24px;background:#f0f0f0;border-top:1px solid #fff;border-left:1px solid #fff;border-right:1px solid #696969;box-shadow:inset -1px 0 0 #a0a0a0"></div>
<div class="t" style="left:627px;top:918px;font-size:15px;color:#000;">剪辑历史</div>
<div class="a" style="left:432px;top:912px;width:82px;height:26px;background:#f0f0f0;border-top:1px solid #fff;border-left:1px solid #fff;border-right:1px solid #696969;box-shadow:inset -1px 0 0 #a0a0a0"></div>
<div class="t" style="left:467px;top:916px;font-size:15px;color:#000;">搜寻1</div>
<svg class="a" style="left:36px;top:917px;" width="14" height="17" viewBox="0 0 14 17"><path d="M2.5 5.5a4.5 4.5 0 1 1 6.5 4l-1.5 1v2h-3v-3l2-1.5a1.5 1.5 0 1 0-1-2.5z" fill="#ff0" stroke="#000" stroke-width="1.2"/><circle cx="6" cy="15" r="1.6" fill="#ff0" stroke="#000"/></svg>
<svg class="a" style="left:107px;top:917px;" width="16" height="16" viewBox="0 0 16 16"><rect x="0.5" y="0.5" width="14" height="15" fill="#fff" stroke="#000" stroke-width="1.2"/><rect x="1" y="1" width="13" height="2" fill="#00c"/><path d="M3 6h6M3 8.5h8M3 11h5" stroke="#000"/></svg>
<svg class="a" style="left:180px;top:917px;" width="15" height="16" viewBox="0 0 15 16"><path d="M2 1v14M6 1v14M10 1v14M14 1v14" stroke="#000" stroke-width="1.6" stroke-dasharray="2 1.2"/><path d="M0 8h15" stroke="#33f" stroke-width="1"/></svg>
<svg class="a" style="left:264px;top:916px;" width="21" height="19" viewBox="0 0 21 19"><circle cx="8" cy="8" r="6.5" fill="none" stroke="#000" stroke-width="1.6"/><path d="M12.5 12.5l6 6" stroke="#000" stroke-width="2.6"/></svg>
<svg class="a" style="left:352px;top:917px;" width="21" height="16" viewBox="0 0 21 16"><path d="M1 7l5-5l5 5l-5 5z" fill="#ff0" stroke="#000"/><path d="M1 7v2l5 5v-2zM6 12v2l5-5v-2z" fill="#880" stroke="#000" stroke-width="0.8"/><path d="M9 7l5-5l5 5l-5 5z" fill="#fff" stroke="#000"/><path d="M14 12v2l5-5v-2z" fill="#555" stroke="#000" stroke-width="0.8"/></svg>
<svg class="a" style="left:440px;top:914px;" width="19" height="18" viewBox="0 0 19 18"><rect x="0.5" y="0.5" width="13" height="14" fill="#fff" stroke="#000" stroke-width="1.2"/><path d="M2.5 3h4M2.5 5.5h3M2.5 8h3M2.5 10.5h4" stroke="#000"/><circle cx="9.5" cy="8" r="3.5" fill="#eee" stroke="#000"/><path d="M12 11l5 5" stroke="#000" stroke-width="2.2"/></svg>
<svg class="a" style="left:520px;top:917px;" width="19" height="18" viewBox="0 0 19 18"><rect x="0.5" y="0.5" width="13" height="14" fill="#fff" stroke="#000" stroke-width="1.2"/><path d="M2.5 3h4M2.5 5.5h3M2.5 8h3M2.5 10.5h4" stroke="#000"/><circle cx="9.5" cy="8" r="3.5" fill="#eee" stroke="#000"/><path d="M12 11l5 5" stroke="#000" stroke-width="2.2"/></svg>
<svg class="a" style="left:603px;top:918px;" width="15" height="16" viewBox="0 0 15 16"><rect x="0.5" y="0.5" width="13" height="15" fill="#fff" stroke="#000" stroke-width="1.3"/><path d="M3 4h7M3 7h5M3 10h7M3 12.5h4" stroke="#000"/></svg>
<svg class="a" style="left:17px;top:70px;" width="16" height="18" viewBox="0 0 16 18"><path d="M1 1h9l5 5v11h-14z" fill="#fff" stroke="#000" stroke-width="2" stroke-linejoin="round"/><path d="M10 1v5h5" fill="none" stroke="#000" stroke-width="1.2"/><path d="M4 6h4M4 8.5h4M4 11h8M4 13.5h8M4 15.5h8" stroke="#000" stroke-width="1"/></svg>
<svg class="a" style="left:42px;top:71px;" width="20" height="17" viewBox="0 0 20 17"><path d="M1 16V4h4l1 1h7v3" fill="none" stroke="#000" stroke-width="2"/><path d="M1 16l4-8h13l-4 8z" fill="#fff" stroke="#000" stroke-width="2" stroke-linejoin="round"/><path d="M11 3q3-3 6 0" fill="none" stroke="#000" stroke-width="1.5"/><path d="M15.5 3h3v3z" fill="#000"/></svg>
<svg class="a" style="left:71px;top:70px;" width="18" height="18" viewBox="0 0 18 18"><rect x="1" y="1" width="16" height="16" rx="1.5" fill="#fff" stroke="#000" stroke-width="2"/><path d="M4 1v8h10v-8" fill="none" stroke="#000" stroke-width="1.5"/><rect x="4.5" y="12" width="9" height="5" fill="#000"/><rect x="6" y="13" width="4" height="3" fill="#777"/><rect x="11" y="13" width="1.5" height="3" fill="#fff"/></svg>
<div class="a" style="left:99px;top:69px;width:1px;height:21px;background:#a0a0a0;"></div>
<div class="a" style="left:100px;top:69px;width:1px;height:21px;background:#fff;"></div>
<svg class="a" style="left:113px;top:70px;" width="13" height="18" viewBox="0 0 13 18"><path d="M3 0l5 11M10 0l-5 11" stroke="#000" stroke-width="1.8"/><ellipse cx="3" cy="14.5" rx="2.3" ry="2.8" fill="#fff" stroke="#000" stroke-width="1.5"/><ellipse cx="10" cy="14" rx="2.3" ry="2.8" fill="#fff" stroke="#000" stroke-width="1.5"/></svg>
<svg class="a" style="left:138px;top:71px;" width="20" height="17" viewBox="0 0 20 17"><path d="M1 1h7l2 2v10h-9z" fill="#fff" stroke="#000" stroke-width="1.6"/><path d="M3 5h3M3 7.5h5M3 10h5" stroke="#000"/><path d="M8.5 4.5h6l3 3v9h-9z" fill="#fff" stroke="#00008c" stroke-width="1.8"/><path d="M10.5 9h3M10.5 11.5h5M10.5 14h5" stroke="#000"/></svg>
<svg class="a" style="left:167px;top:70px;" width="20" height="18" viewBox="0 0 20 18"><rect x="1" y="2" width="16" height="14" rx="1.5" fill="#808040" stroke="#000" stroke-width="1.6"/><path d="M5 4l4-3l4 3z" fill="#ff0" stroke="#000"/><rect x="8.5" y="8.5" width="10" height="9" fill="#fff" stroke="#00008c" stroke-width="1.8"/><path d="M10.5 12h4M10.5 14.5h6" stroke="#00008c"/></svg>
<svg class="a" style="left:197px;top:75px;" width="17" height="10" viewBox="0 0 17 10"><path d="M2 7q0-6 6-6q3 0 5 3" fill="none" stroke="#b4b4b4" stroke-width="2"/><path d="M15 3v6h-6z" fill="#b4b4b4"/><path d="M2 6q0 3 2 3" fill="none" stroke="#b4b4b4" stroke-width="2"/></svg>
<svg class="a" style="left:226px;top:75px;" width="17" height="10" viewBox="0 0 17 10"><path d="M15 7q0-6-6-6q-3 0-5 3" fill="none" stroke="#b4b4b4" stroke-width="2"/><path d="M2 3v6h6z" fill="#b4b4b4"/><path d="M15 6q0 3-2 3" fill="none" stroke="#b4b4b4" stroke-width="2"/></svg>
<div class="a" style="left:253px;top:69px;width:1px;height:21px;background:#a0a0a0;"></div>
<div class="a" style="left:254px;top:69px;width:1px;height:21px;background:#fff;"></div>
<svg class="a" style="left:262px;top:71px;" width="21" height="19" viewBox="0 0 21 19"><rect x="1" y="1" width="15" height="15" fill="#fff" stroke="#000" stroke-width="2"/><path d="M3 3.5h3M3 6h3M3 8.5h3M3 11h3M3 13.5h3" stroke="#000"/><circle cx="11" cy="8.5" r="4" fill="#f0f0f0" stroke="#000" stroke-width="1.2"/><path d="M14 12l5 5" stroke="#000" stroke-width="2.5"/></svg>
<div class="a" style="left:292px;top:69px;width:1px;height:21px;background:#a0a0a0;"></div>
<div class="a" style="left:293px;top:69px;width:1px;height:21px;background:#fff;"></div>
<div class="a" style="left:298px;top:66px;width:27px;height:26px;background:#f5f5f5;border-top:1px solid #a0a0a0;border-left:1px solid #a0a0a0;border-right:1px solid #fff;border-bottom:1px solid #fff"></div>
<div class="a" style="left:326px;top:66px;width:27px;height:26px;background:#f5f5f5;border-top:1px solid #a0a0a0;border-left:1px solid #a0a0a0;border-right:1px solid #fff;border-bottom:1px solid #fff"></div>
<svg class="a" style="left:304px;top:72px;" width="18" height="17" viewBox="0 0 18 17"><rect x="1" y="1" width="16" height="15" fill="#fff" stroke="#000" stroke-width="2"/><rect x="5" y="2" width="11" height="2.5" fill="#00f"/><path d="M1 5h16M5 5v11" stroke="#000" stroke-width="1.6"/></svg>
<svg class="a" style="left:333px;top:72px;" width="18" height="17" viewBox="0 0 18 17"><rect x="1" y="1" width="16" height="15" fill="#fff" stroke="#000" stroke-width="2"/><rect x="5" y="2" width="11" height="2.5" fill="#00f"/><path d="M1 5h16M1 12h16" stroke="#000" stroke-width="1.6"/></svg>
<svg class="a" style="left:360px;top:72px;" width="18" height="17" viewBox="0 0 18 17"><rect x="1" y="1" width="16" height="15" fill="#fff" stroke="#000" stroke-width="2"/><rect x="5" y="1.5" width="11" height="2.5" fill="#00c"/><path d="M1 4.5h16M5 4.5v11M5 9h12M5 13h12" stroke="#000" stroke-width="1.4"/></svg>
<div class="a" style="left:388px;top:69px;width:1px;height:21px;background:#a0a0a0;"></div>
<div class="a" style="left:389px;top:69px;width:1px;height:21px;background:#fff;"></div>
<svg class="a" style="left:403px;top:73px;" width="9" height="14" viewBox="0 0 9 14"><path d="M0 0l9 7l-9 7z" fill="#000"/></svg>
<div class="a" style="left:431px;top:75px;width:11px;height:11px;background:#a8a8a8;"></div>
<svg class="a" style="left:455px;top:70px;" width="20" height="20" viewBox="0 0 20 20"><rect x="2" y="1.5" width="16.5" height="14" fill="#f0f0f0" stroke="#a8a8a8" stroke-width="1.8"/><path d="M2 4h16" stroke="#a8a8a8" stroke-width="1.5"/><path d="M6 7h3M10 7h3M6 9.5h7" stroke="#a8a8a8" stroke-width="1.3"/><circle cx="6" cy="15" r="4.5" fill="#a8a8a8"/><circle cx="6" cy="15" r="1.6" fill="#f0f0f0"/><path d="M11 12l4 4" stroke="#a8a8a8" stroke-width="2"/></svg>
<svg class="a" style="left:484px;top:70px;" width="21" height="21" viewBox="0 0 21 21"><g fill="none" stroke="#a8a8a8" stroke-width="2"><path d="M4 4q-2 0-2 2v4l-1.5 1.5l1.5 1.5v4q0 2 2 2M9 4q2 0 2 2v4l1.5 1.5l-1.5 1.5v4q0 2-2 2"/><path d="M1 1.5h14v7"/><path d="M12 8h6l-3 4z" fill="#a8a8a8" stroke="none"/></g></svg>
<svg class="a" style="left:512px;top:70px;" width="21" height="21" viewBox="0 0 21 21"><g fill="none" stroke="#a8a8a8" stroke-width="2"><path d="M5 5q-2 0-2 2v4l-1.5 1.5l1.5 1.5v4q0 2 2 2M15 5q2 0 2 2v4l1.5 1.5l-1.5 1.5v4q0 2-2 2"/><path d="M1 1.5h9v8"/><path d="M7 9h6l-3 4z" fill="#a8a8a8" stroke="none"/></g></svg>
<svg class="a" style="left:540px;top:70px;" width="21" height="21" viewBox="0 0 21 21"><g fill="none" stroke="#a8a8a8" stroke-width="2"><path d="M4 5q-2 0-2 2v4l-1.5 1.5l1.5 1.5v4q0 2 2 2M11 5q2 0 2 2v4l1.5 1.5l-1.5 1.5v4q0 2-2 2"/><path d="M8 1.5h7v8"/><path d="M12 9h6l-3 4z" fill="#a8a8a8" stroke="none"/></g></svg>
<svg class="a" style="left:569px;top:70px;" width="21" height="21" viewBox="0 0 21 21"><g fill="none" stroke="#a8a8a8" stroke-width="2"><path d="M10 4q-2 0-2 2v4l-1.5 1.5l1.5 1.5v4q0 2 2 2M16 4q2 0 2 2v4l1.5 1.5l-1.5 1.5v4q0 2-2 2"/><path d="M0 7h6"/><path d="M5 4v6l4-3z" fill="#a8a8a8" stroke="none"/></g></svg>
<svg class="a" style="left:600px;top:70px;" width="19" height="20" viewBox="0 0 19 20"><path d="M6 19q-5-5-5.5-8q0-2 2-1l3 3v-10q0-1.5 1.5-1.5t1.5 1.5v7v-9q0-1.5 1.5-1.5t1.5 1.5v9v-8q0-1.5 1.5-1.5t1.5 1.5v8v-5q0-1.5 1.5-1.5t1.5 1.5v9q0 5-4 6z" fill="#f0f0f0" stroke="#a8a8a8" stroke-width="1.6"/></svg>
<div class="a" style="left:628px;top:69px;width:1px;height:21px;background:#a0a0a0;"></div>
<div class="a" style="left:629px;top:69px;width:1px;height:21px;background:#fff;"></div>
<svg class="a" style="left:636px;top:70px;" width="23" height="20" viewBox="0 0 23 20"><path d="M2.5 3q1-2.5 4-2q3 1 1 4l-2 2v3" fill="none" stroke="#ee0" stroke-width="2.4"/><rect x="4" y="11" width="2.5" height="2.5" fill="#ee0"/><rect x="9" y="8" width="3" height="4" fill="#000"/><rect x="16" y="8" width="3" height="4" fill="#000"/><path d="M7 19v-5l2-3h3l1 2h2l1-2h3l2 3v5h-5v-3h-4v3z" fill="#000"/><rect x="9" y="15" width="2" height="2" fill="#fff"/><rect x="17" y="15" width="2" height="2" fill="#fff"/></svg>
<svg class="a" style="left:14px;top:98px;" width="17" height="22" viewBox="0 0 17 22"><g fill="none" stroke="#a8a8a8" stroke-width="1.5"><rect x="1" y="2" width="15" height="17"/><rect x="4" y="5" width="9" height="3"/><rect x="4" y="11" width="4" height="5"/><rect x="9" y="11" width="4" height="5"/></g></svg>
<div class="a" style="left:41px;top:97px;width:1px;height:22px;background:#a0a0a0;"></div>
<div class="a" style="left:42px;top:97px;width:1px;height:22px;background:#fff;"></div>
<svg class="a" style="left:51px;top:98px;" width="20" height="22" viewBox="0 0 20 22"><g fill="none" stroke="#a8a8a8" stroke-width="1.5"><path d="M1 1v20"/><rect x="4" y="4" width="7" height="5"/><circle cx="6.5" cy="15" r="2.5"/><path d="M12 6.5h7M12 15h7"/><path d="M14 4l-2 2.5l2 2.5M14 12.5l-2 2.5l2 2.5"/></g></svg>
<svg class="a" style="left:80px;top:98px;" width="20" height="22" viewBox="0 0 20 22"><g fill="none" stroke="#a8a8a8" stroke-width="1.5"><path d="M19 1v20"/><rect x="9" y="4" width="7" height="5"/><circle cx="13" cy="15" r="2.5"/><path d="M1 6.5h7M1 15h7"/><path d="M6 4l2 2.5l-2 2.5M6 12.5l2 2.5l-2 2.5"/></g></svg>
<svg class="a" style="left:109px;top:98px;" width="19" height="22" viewBox="0 0 19 22"><g fill="none" stroke="#a8a8a8" stroke-width="1.5"><path d="M0 1h19"/><circle cx="4" cy="6" r="2.5"/><rect x="9" y="4" width="8" height="5"/><path d="M4 11v10M13 11v10M1.5 14l2.5-3l2.5 3M10.5 14l2.5-3l2.5 3"/></g></svg>
<svg class="a" style="left:137px;top:98px;" width="20" height="22" viewBox="0 0 20 22"><g fill="none" stroke="#a8a8a8" stroke-width="1.5"><path d="M0 21h20"/><circle cx="5" cy="15" r="2.5"/><rect x="10" y="12" width="8" height="5"/><path d="M5 1v9M14 1v9M2.5 7l2.5 3l2.5-3M11.5 7l2.5 3l2.5-3"/></g></svg>
<div class="a" style="left:166px;top:97px;width:1px;height:22px;background:#a0a0a0;"></div>
<div class="a" style="left:167px;top:97px;width:1px;height:22px;background:#fff;"></div>
<svg class="a" style="left:176px;top:98px;" width="20" height="22" viewBox="0 0 20 22"><g fill="none" stroke="#a8a8a8" stroke-width="1.5"><rect x="1" y="2" width="18" height="18"/><rect x="8" y="5" width="4" height="12"/><path d="M1 11h5M14 11h5M4 9l2 2l-2 2M16 9l-2 2l2 2"/></g></svg>
<svg class="a" style="left:205px;top:98px;" width="20" height="22" viewBox="0 0 20 22"><g fill="none" stroke="#a8a8a8" stroke-width="1.5"><rect x="1" y="2" width="18" height="18"/><rect x="5" y="9" width="10" height="4"/><path d="M10 2v5M10 15v5M8 5l2 2l2-2M8 17l2-2l2 2"/></g></svg>
<svg class="a" style="left:236px;top:98px;" width="18" height="22" viewBox="0 0 18 22"><g fill="none" stroke="#a8a8a8" stroke-width="1.5"><rect x="1" y="15" width="16" height="4"/><rect x="3" y="8" width="12" height="4"/><path d="M9 8V1M1 4h7M10 4h7"/><path d="M5 2l3 2l-3 2M13 2l-3 2l3 2" fill="#a8a8a8"/></g></svg>
<svg class="a" style="left:262px;top:98px;" width="19" height="22" viewBox="0 0 19 22"><g fill="none" stroke="#a8a8a8" stroke-width="1.5"><rect x="1" y="3" width="4" height="13"/><rect x="7" y="1" width="4" height="17"/><path d="M15 1v20M12 10h7M13 4l2 3l2-3M13 16l2-3l2 3"/></g></svg>
<svg class="a" style="left:292px;top:98px;" width="19" height="22" viewBox="0 0 19 22"><g fill="none" stroke="#a8a8a8" stroke-width="1.5"><path d="M1 3h3v16h-3M18 3h-3v16h3M5 11h9"/><path d="M5 11l3-2.5v5zM14 11l-3-2.5v5z" fill="#a8a8a8"/></g></svg>
<svg class="a" style="left:323px;top:98px;" width="16" height="22" viewBox="0 0 16 22"><g fill="none" stroke="#a8a8a8" stroke-width="1.5"><path d="M1 1h14M1 1v3M15 1v3M1 21h14M1 21v-3M15 21v-3M8 3v16"/><path d="M8 3l-3 4h6zM8 19l-3-4h6z" fill="#a8a8a8"/></g></svg>
<div class="a" style="left:349px;top:97px;width:1px;height:22px;background:#a0a0a0;"></div>
<div class="a" style="left:350px;top:97px;width:1px;height:22px;background:#fff;"></div>
<svg class="a" style="left:360px;top:98px;" width="19" height="22" viewBox="0 0 19 22"><g fill="none" stroke="#a8a8a8" stroke-width="1.5"><rect x="1" y="6" width="17" height="10"/><path d="M3 11h13M6 8l-3 3l3 3M13 8l3 3l-3 3"/></g></svg>
<svg class="a" style="left:393px;top:98px;" width="12" height="22" viewBox="0 0 12 22"><g fill="none" stroke="#a8a8a8" stroke-width="1.5"><rect x="1" y="2" width="10" height="18"/><path d="M6 4v14M3 7l3-3l3 3M3 15l3 3l3-3"/></g></svg>
<svg class="a" style="left:418px;top:98px;" width="19" height="22" viewBox="0 0 19 22"><g fill="none" stroke="#a8a8a8" stroke-width="1.5"><rect x="1" y="2" width="17" height="18"/><path d="M9.5 4v14M3 11h13M7 7l2.5-3l2.5 3M7 15l2.5 3l2.5-3M6 8.5l-3 2.5l3 2.5M13 8.5l3 2.5l-3 2.5"/></g></svg>
<div class="a" style="left:1909px;top:944px;width:1px;height:84px;background:#e3e3e3;"></div>
<div class="a" style="left:1910px;top:938px;width:4px;height:96px;background:#f0f0f0;"></div>
<div class="a" style="left:1913px;top:937px;width:1px;height:98px;background:#696969;"></div>
<svg class="a" style="left:1770px;top:940px;" width="150" height="103" viewBox="0 0 150 103"><rect x="6" y="91" width="144" height="10" fill="#fff"/><path d="M84 57 q14 2 22 20 q4 8 6 12 q3 5-1 7 q-4 2-9 0 l-12-4 q-6-16-10-30z" fill="#c2b6b2" stroke="#6e4e42" stroke-width="1.8"/><path d="M104 92 q4-3 8-1" fill="none" stroke="#6e4e42" stroke-width="1.4"/><circle cx="108" cy="94" r="2" fill="#f4b4ac"/><path d="M48 13 l14 6 l-12 12z" fill="#c2b6b2" stroke="#6e4e42" stroke-width="1.8" stroke-linejoin="round"/><path d="M119 34 l-10 14 l-6-12z" fill="#c2b6b2" stroke="#6e4e42" stroke-width="1.8" stroke-linejoin="round"/><ellipse cx="77" cy="39" rx="35" ry="25" fill="#c2b6b2" stroke="#6e4e42" stroke-width="1.8"/><path d="M50 17 l1 8 l6-5z M116 35 l-6 8 l-3-6z" fill="#f09a90"/><circle cx="57" cy="44.5" r="2.2" fill="#3a2018"/><circle cx="79" cy="49" r="2.2" fill="#3a2018"/><circle cx="51" cy="46" r="2.3" fill="#f4a69a"/><circle cx="84" cy="53.5" r="2.3" fill="#f4a69a"/><path d="M64 48 q2 2 4 0 q2 2 4 0" fill="none" stroke="#6e4e42" stroke-width="1.1"/><path d="M14 95 q-10-8-6-20 q3-6 7-4 q-4 6-1 12" fill="#fff" stroke="#6e4e42" stroke-width="1.8"/><path d="M23 60 l10 4 l-8 8z" fill="#fff" stroke="#6e4e42" stroke-width="1.8" stroke-linejoin="round"/><path d="M84 61 l0 10 l-8-6z" fill="#fff" stroke="#6e4e42" stroke-width="1.8" stroke-linejoin="round"/><path d="M23 96 q-4-26 14-34 q20-8 40 2 q14 10 10 32 q-30 6-64 0z" fill="#fff" stroke="#6e4e42" stroke-width="1.8"/><path d="M8 96 q-2 4 4 4 h20" fill="none" stroke="#6e4e42" stroke-width="1.8"/><path d="M25 63 l3 7 l4-4z" fill="#f4a69a"/><path d="M44 87 q3 2 6 0 M55 88 q3 3 6 0 q3 3 6 0 M69 87 q3 2 6 0" fill="none" stroke="#6e4e42" stroke-width="1.2"/><circle cx="39" cy="87" r="2.8" fill="#fbd8d0"/><circle cx="79" cy="87" r="2.8" fill="#fbd8d0"/><path d="M36 56 q4-4 8 0" fill="#c2b6b2" stroke="#6e4e42" stroke-width="1.5"/><path d="M83 76 q6 0 7 6" fill="none" stroke="#6e4e42" stroke-width="1.5"/><path d="M23.5 33 q-5-3-4-6 q1.5-3 4.5-0.5 q3-3 5-0.5 q1 3-5.5 7z" fill="#f22"/><path d="M111 83 l10-2 l3 12 l-2 5 l-10 2" fill="none" stroke="#ff5a1a" stroke-width="2.6" stroke-linejoin="round"/><path d="M113 90 l8-1" stroke="#ff5a1a" stroke-width="2.2"/><circle cx="139" cy="51" r="11.5" fill="#c2b6b2" stroke="#6e4e42" stroke-width="1.6"/><path d="M134 47h10v7h-10zM139 43v15" fill="none" stroke="#6e4e42" stroke-width="1.4"/><circle cx="139" cy="82.5" r="11.5" fill="#c2b6b2" stroke="#6e4e42" stroke-width="1.6"/><circle cx="140" cy="79" r="3.5" fill="#ff4a2a"/><rect x="135" y="84" width="9" height="5" fill="#4a2a1a"/></svg>
</body></html>
